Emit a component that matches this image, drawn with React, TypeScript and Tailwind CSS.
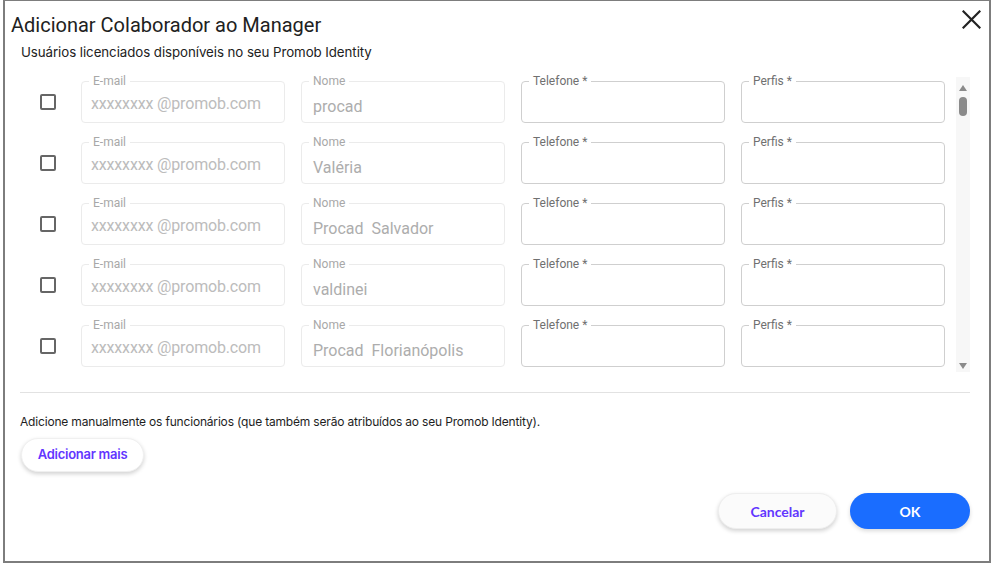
import { useState } from 'react';

interface Row {
  email: string;
  name: string;
}

const rows: Row[] = [
  { email: 'xxxxxxxx @promob.com', name: 'procad' },
  { email: 'xxxxxxxx @promob.com', name: 'Valéria' },
  { email: 'xxxxxxxx @promob.com', name: 'Procad  Salvador' },
  { email: 'xxxxxxxx @promob.com', name: 'valdinei' },
  { email: 'xxxxxxxx @promob.com', name: 'Procad  Florianópolis' },
];

export default function App() {
  return (
    <div className="w-[993px] h-[564px] bg-white font-['Roboto',sans-serif]">
      <div className="ml-[3px] w-[988px] h-[563px] border-t border-l-2 border-r-2 border-b-2 border-[#7d7d7d] flex flex-col">
        <div className="flex justify-between items-start">
          <h2 className="mt-[11px] ml-[6px] text-[20px] leading-[26px] text-[#212121]">
            Adicionar Colaborador ao Manager
          </h2>
          <button className="mt-[9px] mr-[8px] p-0">
            <svg width="19" height="19" viewBox="0 0 19 19" className="text-[#222]">
              <path d="M1.5 1.5 L17.5 17.5 M17.5 1.5 L1.5 17.5" stroke="currentColor" strokeWidth="2.2" strokeLinecap="square" />
            </svg>
          </button>
        </div>

        <p className="mt-[6px] ml-[16px] font-['Inter',sans-serif] text-[13.3px] leading-4 tracking-[-0.005em] text-[#222]">
          Usuários licenciados disponíveis no seu Promob Identity
        </p>

        <div className="mt-[17px] ml-[15px] mr-[19px] flex h-[295px]">
          <div className="flex-1 pt-[4px] flex flex-col gap-[19px]">
            {rows.map((r, i) => (
              <UserRow key={i} row={r} />
            ))}
          </div>
          <Scrollbar />
        </div>

        <div className="mt-[20px] ml-[15px] mr-[19px] h-px bg-[#e2e2e2]" />

        <p className="mt-[21px] ml-[15px] font-['Inter',sans-serif] text-[12px] leading-4 tracking-[-0.015em] text-[#1e1e1e]">
          Adicione manualmente os funcionários (que também serão atribuídos ao seu Promob Identity).
        </p>

        <div className="mt-[8px] ml-[16px]">
          <button className="h-[34px] w-[123px] rounded-full bg-white shadow-[0_2px_4px_rgba(0,0,0,0.18)] border border-[#f0f0f0] font-['Inter',sans-serif] font-semibold text-[13px] tracking-[-0.02em] text-[#6236ff]">
            Adicionar mais
          </button>
        </div>

        <div className="mt-[21px] mr-[19px] flex justify-end gap-[13px]">
          <button className="h-[36px] w-[119px] rounded-full bg-[#fbfbfb] shadow-[0_2px_4px_rgba(0,0,0,0.18)] border border-[#eeeeee] font-['Lato',sans-serif] font-bold text-[14px] text-[#6236ff]">
            Cancelar
          </button>
          <button className="h-[36px] w-[120px] rounded-full bg-[#1a6dff] shadow-[0_2px_4px_rgba(0,0,0,0.15)] font-['Lato',sans-serif] font-bold text-[14px] text-white">
            OK
          </button>
        </div>
      </div>
    </div>
  );
}

function UserRow({ row }: { row: Row }) {
  const [checked, setChecked] = useState(false);
  return (
    <div className="flex items-center shrink-0">
      <button
        onClick={() => setChecked(!checked)}
        className="ml-[20px] mr-[25px] w-[16px] h-[16px] rounded-[2px] border-2 border-[#666] bg-white"
      />
      <div className="flex gap-4">
        <Field label="E-mail" disabled value={row.email} valueClass="pt-[14px] pl-[9px] text-[#bcbcbc] tracking-[-0.01em]" />
        <Field label="Nome" disabled value={row.name} valueClass="pt-[17px] pl-[11px] text-[#adadad]" />
        <Field label="Telefone *" />
        <Field label="Perfis *" />
      </div>
    </div>
  );
}

function Field({
  label,
  value,
  disabled,
  valueClass,
}: {
  label: string;
  value?: string;
  disabled?: boolean;
  valueClass?: string;
}) {
  return (
    <div
      className={[
        'relative w-[204px] h-[42px] rounded-[4px] border',
        disabled ? 'border-[#ebebeb]' : 'border-[#cfcfcf]',
      ].join(' ')}
    >
      <span
        className={[
          'absolute -top-[7px] left-[7px] px-[4px] bg-white text-[12px] leading-3 whitespace-nowrap',
          disabled ? 'text-[#a8a8a8]' : 'text-[#707070]',
        ].join(' ')}
      >
        {label}
      </span>
      {value && (
        <div className={['text-[16px] leading-[16px] whitespace-pre', valueClass].join(' ')}>{value}</div>
      )}
    </div>
  );
}

function Scrollbar() {
  return (
    <div className="ml-[10px] w-[14px] bg-[#f7f7f7] flex flex-col items-center justify-between pt-[8px] pb-[3px]">
      <div className="flex flex-col items-center gap-[6px]">
        <svg width="8" height="6" viewBox="0 0 8 6">
          <path d="M4 0 L8 6 L0 6 Z" fill="#8a8a8a" />
        </svg>
        <div className="w-[8px] h-[19px] rounded-full bg-[#8a8a8a]" />
      </div>
      <svg width="8" height="6" viewBox="0 0 8 6">
        <path d="M0 0 L8 0 L4 6 Z" fill="#8a8a8a" />
      </svg>
    </div>
  );
}
